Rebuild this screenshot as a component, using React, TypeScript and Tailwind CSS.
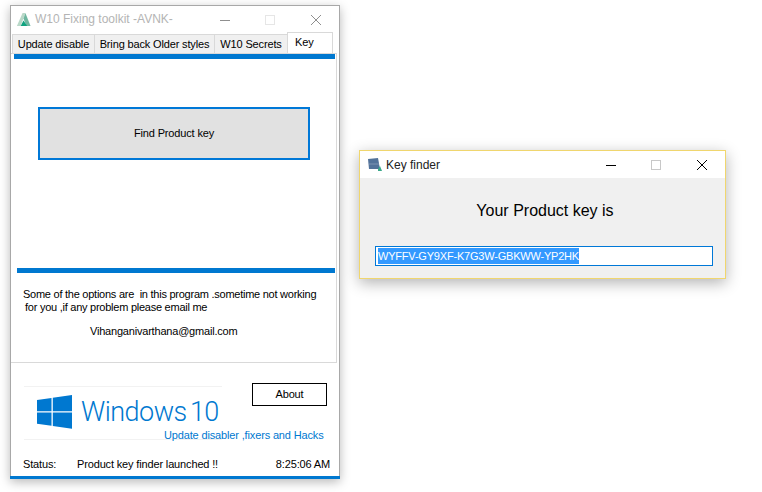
import React from 'react'

const sans = "font-['Liberation_Sans',Arial,sans-serif]"

function CaptionButtons({ dim }: { dim?: boolean }) {
  const stroke = dim ? '#8f8f8f' : '#000000'
  return (
    <div className="flex items-center">
      <svg width="12" height="12" viewBox="0 0 12 12" className="mr-[34px]">
        <path d="M1 6.5H11" stroke={stroke} strokeWidth="1" />
      </svg>
      <svg width="10" height="10" viewBox="0 0 10 10" className="mr-[35px]">
        <rect x="0.5" y="0.5" width="9" height="9" fill="none" stroke={dim ? '#e6e6e6' : '#c8c8c8'} />
      </svg>
      <svg width="12" height="12" viewBox="0 0 12 12">
        <path d="M1 1L11 11M11 1L1 11" stroke={stroke} strokeWidth="1" />
      </svg>
    </div>
  )
}

function Tab({ label, width }: { label: string; width: string }) {
  return (
    <div className={`${width} h-[19px] flex items-center justify-center whitespace-nowrap bg-[#f0f0f0] border border-[#d9d9d9] border-b-0 -ml-px first:ml-0`}>
      {label}
    </div>
  )
}

function MainWindow() {
  return (
    <div className={`${sans} absolute left-[10px] top-[5px] w-[330px] h-[474px] bg-white border border-[#a8a8a8] border-b-0 shadow-[0_3px_10px_rgba(0,0,0,0.28)] flex flex-col text-[11px] leading-[13px] tracking-[-0.15px] text-black`}>
      <div className="h-[27px] shrink-0 flex items-center pl-[4px] pr-[17px] tracking-normal">
        <svg width="17" height="16" viewBox="0 0 16 17" className="mr-[3px] shrink-0">
          <path d="M1 15L7 1H10L5 15Z" fill="#b9d8c8" />
          <path d="M10 1L15.5 15H11L8 7Z" fill="#6fb7a0" />
          <path d="M5 15L8 9L12 15Z" fill="#10a37f" />
        </svg>
        <span className="text-[12px] text-[#b4b4b4] flex-1 whitespace-nowrap">W10 Fixing toolkit -AVNK-</span>
        <CaptionButtons dim />
      </div>
      <div className="relative h-[20px] shrink-0 flex items-end pl-[1px] pr-[4px]">
        <Tab label="Update disable" width="w-[83px]" />
        <Tab label="Bring back Older styles" width="w-[121px]" />
        <Tab label="W10 Secrets" width="w-[74px]" />
        <div className="relative w-[46px] h-[21px] -ml-px pl-[7px] pt-[3px] bg-white border border-[#d9d9d9] border-b-0">Key</div>
      </div>
      <div className="h-[310px] shrink-0 mr-[2px] border-t border-r border-b border-[#d9d9d9] flex flex-col">
        <div className="h-[5px] ml-[3px] mr-[1px] shrink-0 bg-[#0078d0]" />
        <div className="h-[48px] shrink-0" />
        <div className="h-[53px] ml-[27px] w-[272px] shrink-0 bg-[#e1e1e1] border-2 border-[#0078d7] flex items-center justify-center">
          Find Product key
        </div>
        <div className="h-[108px] shrink-0" />
        <div className="h-[5px] ml-[6px] mr-[1px] shrink-0 bg-[#0078d0]" />
        <div className="pl-[12px] pt-[15px] whitespace-nowrap">
          <p className="tracking-[-0.25px]">Some of the options are&nbsp; in this program .sometime not working</p>
          <p className="pl-[2px] tracking-[-0.25px]">for you ,if any problem please email me</p>
          <p className="pl-[67px] pt-[11px] tracking-[-0.2px]">Vihanganivarthana@gmail.com</p>
        </div>
      </div>
      <div className="relative flex-1 flex flex-col">
        <div className="flex-1 flex pl-[13px] pt-[23px]">
          <div className="relative w-[198px] h-[54px] border-t border-b border-[#f2f2f2]">
            <div className="flex items-center pl-[13px] pt-[8px]">
              <svg width="35" height="34" viewBox="0 0 35 34" className="mr-[9px] shrink-0">
                <path d="M0 5L14.5 3V16.2H0Z M15.8 2.8L35 0V16.2H15.8Z M0 17.5H14.5V30.7L0 28.7Z M15.8 17.5H35V33.7L15.8 30.9Z" fill="#0078d0" />
              </svg>
              <span className="font-['Roboto',sans-serif] font-light text-[27px] leading-[34px] tracking-[-0.5px] [word-spacing:-3px] text-[#0078d0] whitespace-nowrap">Windows 10</span>
            </div>
          </div>
          <div className="ml-[30px] -mt-[3px] w-[75px] h-[23px] border border-black flex items-center justify-center">About</div>
        </div>
        <div className="absolute left-[153px] top-[66px] text-[#0078d0] whitespace-nowrap">Update disabler ,fixers and Hacks</div>
        <div className="h-[26px] shrink-0 flex items-start pl-[12px] pr-[9px] pt-[8px] whitespace-nowrap">
          <span className="w-[54px]">Status:</span>
          <span className="flex-1">Product key finder launched !!</span>
          <span>8:25:06 AM</span>
        </div>
        <div className="h-[3px] shrink-0 -mx-px bg-[#0078d0]" />
      </div>
    </div>
  )
}

function KeyWindow() {
  return (
    <div className={`${sans} absolute left-[359px] top-[150px] w-[367px] h-[129px] bg-[#f0f0f0] border border-[#f0d66e] shadow-[0_4px_14px_rgba(0,0,0,0.3)] flex flex-col text-black`}>
      <div className="h-[27px] shrink-0 bg-white flex items-center pl-[8px] pr-[17px]">
        <svg width="14" height="14" viewBox="0 0 14 14" className="mr-[4px] shrink-0">
          <path d="M0 1L10 0L12 11H1Z" fill="#52729a" />
          <path d="M1 6H11" stroke="#7c93b2" />
          <path d="M10 11L12 8L14 13H10Z" fill="#3aa88a" />
        </svg>
        <span className="text-[12px] text-[#222222] flex-1">Key finder</span>
        <CaptionButtons />
      </div>
      <div className="flex-1 flex flex-col">
        <div className="pt-[23px] pl-[5px] text-center text-[16px] leading-[20px]">Your Product key is</div>
        <div className="mt-[25px] ml-[15px] w-[338px] h-[20px] bg-white border border-[#0078d7] flex items-center pl-[2px]">
          <span className="bg-[#3399ff] text-white text-[11px] leading-[16px] tracking-[-0.2px] whitespace-nowrap">WYFFV-GY9XF-K7G3W-GBKWW-YP2HK</span>
        </div>
      </div>
    </div>
  )
}

export default function App() {
  return (
    <div className="relative w-[762px] h-[492px] bg-white overflow-hidden">
      <MainWindow />
      <KeyWindow />
    </div>
  )
}
